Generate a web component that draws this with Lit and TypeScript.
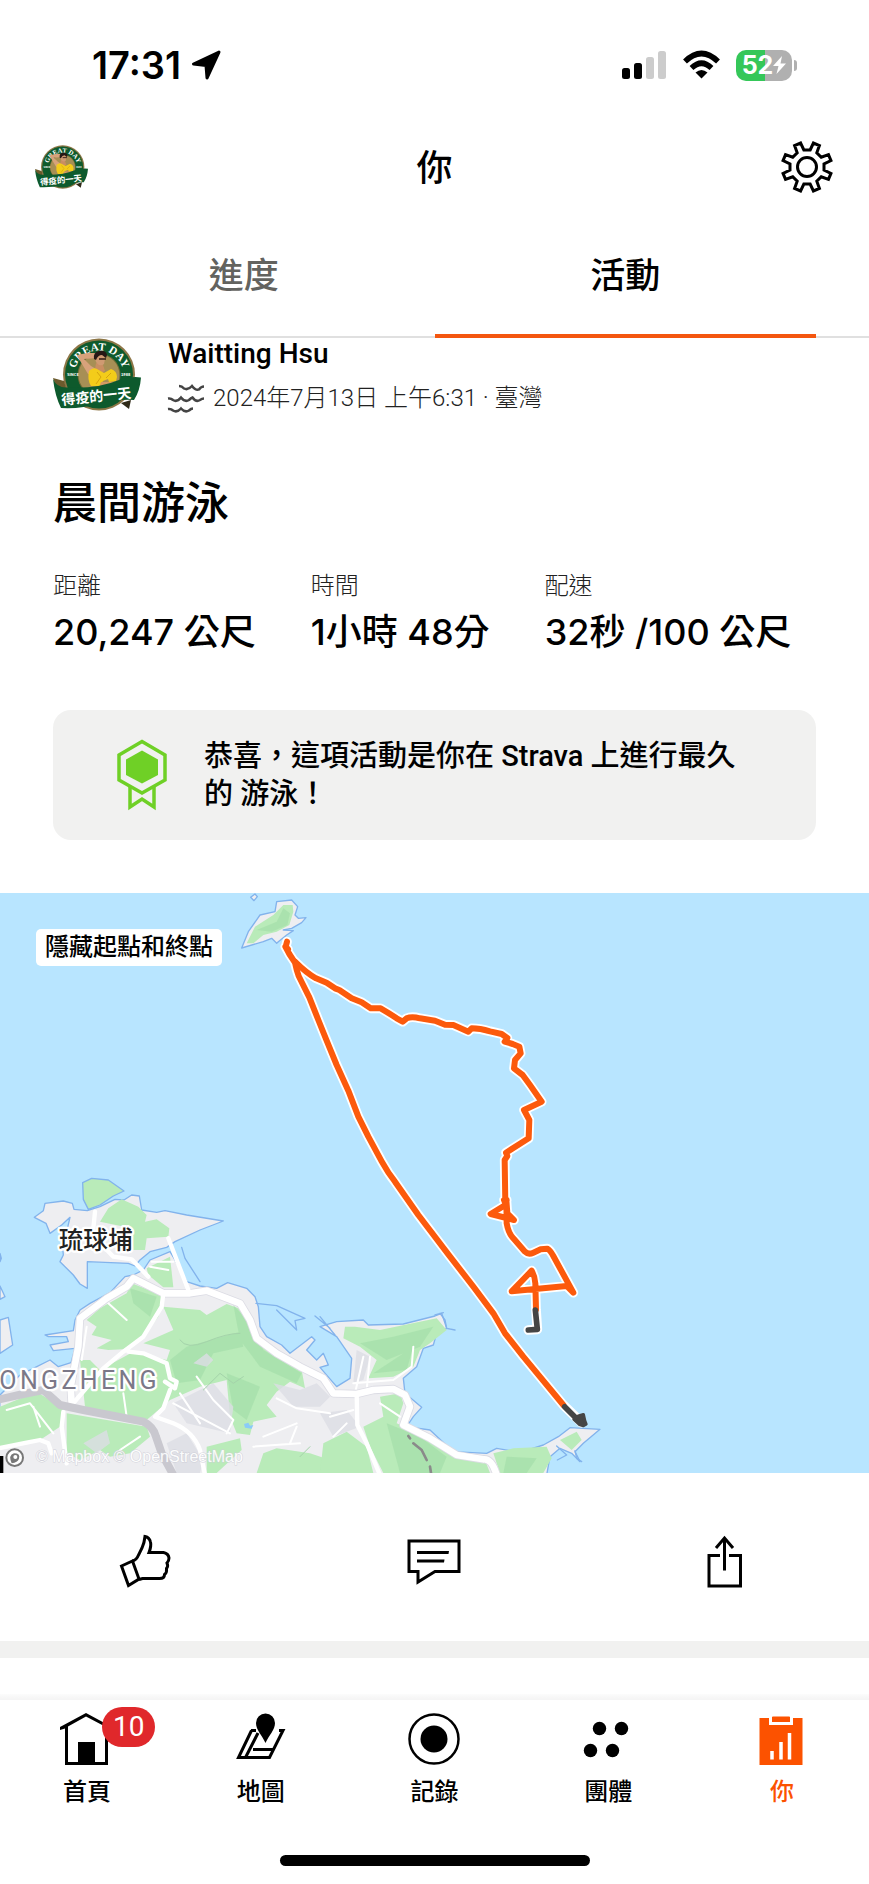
import { LitElement, html, svg, css } from "lit";
import { customElement, property } from "lit/decorators.js";

const gearPath = (() => {
  const point = (radius: number, degrees: number) => {
    const a = (degrees * Math.PI) / 180;
    return `${(26 + radius * Math.sin(a)).toFixed(2)} ${(26 - radius * Math.cos(a)).toFixed(2)}`;
  };
  const points: string[] = [];
  for (let i = 0; i < 8; i++) {
    const mid = 22.5 + i * 45;
    points.push(point(17.3, mid - 12), point(24.8, mid - 7.5), point(24.8, mid + 7.5), point(17.3, mid + 12));
  }
  return `M${points.join("L")}Z`;
})();

const icons = {
  thumb: svg`<g fill="none" stroke="#000" stroke-width="3">
    <path d="M2.500 31L13.500 26L20 44L9.500 50.500Z" />
    <path d="M13.500 26Q17.500 25 19.500 20L23 13Q25.500 7 26 1.500Q30.500 2.500 31.500 7Q32.500 11 30 17.500H44.500Q49.500 18.500 50 23Q50 26 48 28Q49.500 31 47.500 33.500Q48 38 45.500 39.500Q45.500 43.500 40.500 43.500H23.500L20 44.500" />
  </g>`,
  comment: svg`<path d="M0 6H50V36.500H26L9 47V36.500H0Z" fill="none" stroke="#000" stroke-width="3" />
    <path d="M8 16H40L39.500 19H8ZM8 24.500H35.500L35 27.500H8Z" />`,
  share: svg`<path d="M22 20.500H11V51H42.500V20.500H31M26.500 3V35.500M18 13L26.500 3L35 13" fill="none" stroke="#000" stroke-width="3" />`,
  home: svg`<path d="M-1 17V14L25 0L51 14V17L47 15.500V52H4V15.500ZM7 13.500V49H17V29H34V49H44V13.500L25 3.500Z" fill-rule="evenodd" />`,
  map: svg`<path d="M16 17.500H21M44 17.500H48L34.500 44.500H3.500L16.500 17.500M10.500 44.500L23 20M18 36.500H38" fill="none" stroke="#000" stroke-width="3" />
    <path d="M30.500 30C27 22 21 17 21 10A9.500 9.500 0 0 1 40 10C40 17 34 22 30.500 30Z" />`,
  record: svg`<circle cx="26" cy="26" r="24.500" fill="none" stroke="#000" stroke-width="2.500" /><circle cx="26" cy="26" r="13.500" />`,
  groups: svg`<circle cx="17.500" cy="15.500" r="6.700" /><circle cx="39.500" cy="15.500" r="6.700" /><circle cx="8.500" cy="37.500" r="6.700" /><circle cx="30.500" cy="37.500" r="6.700" />`,
  you: svg`<path d="M3.500 5H13V12H37V5H46.500V52H3.500Z" fill="#fc5200" /><path d="M16 4Q16 3.500 17 3.500H33Q34 3.500 34 4V9H16Z" fill="#fc5200" />
    <path d="M16 38V46.500M25 29V46.500M33.500 20V46.500" stroke="#fff" stroke-width="3.500" />`,
};

@customElement("athlete-badge")
class AthleteBadge extends LitElement {
  static styles = css`
    :host { display: block; }
    svg { display: block; width: 100%; height: auto; }
    text { font-family: "Noto Sans CJK TC", sans-serif; font-weight: 700; fill: #fff; }
    .arc { font-family: "Liberation Serif", serif; font-size: 11px; text-anchor: middle; }
    .year { font-size: 4px; }
    .ribbon { font-size: 14px; }
  `;
  render() {
    return html`<svg viewBox="0 0 88 73" role="img" aria-label="Waitting Hsu">
      <circle cx="46" cy="36.500" r="36" fill="#8d7646" />
      <circle cx="46" cy="36.500" r="34" fill="#0e5a2c" />
      <circle cx="46" cy="37" r="21.500" fill="#6f6a35" />
      <circle cx="46" cy="37" r="20.500" fill="#a78f55" />
      <path id="arc" d="M21.500 37A24.500 24.500 0 0 1 70.500 37" fill="none" />
      <text class="arc"><textPath href="#arc" startOffset="50%">GREAT DAY</textPath></text>
      <text class="year" x="14" y="38">SINCE</text><text class="year" x="68" y="38">1988</text>
      <path d="M46 15L34 15L24 17Q24 19 26 21L35 36L40 38L43 31L38 28L31 21L44 20Z" fill="#d7a27b" />
      <path d="M43 25L42 32L46 36L52 33L50 27Z" fill="#c98e62" />
      <path d="M42 18Q44 15 50 16L52 21L51 26Q49 28 46 27Q42 25 42 18Z" fill="#cf9a72" />
      <path d="M41 21Q40 14 46 13Q53 12 54 17L53 20L49 17Q45 17 43 22Z" fill="#251815" />
      <path d="M46 21H53" stroke="#2b1a16" stroke-width="1.500" />
      <path d="M36 33Q40 29 44 31L51 35L58 31Q64 33 64 39L63 43L56 44L55 41L50 43L47 48L38 48Q34 42 36 33Z" fill="#f3cc1a" />
      <path d="M44 34L48 39L43 46M58 35L53 40" fill="none" stroke="#d5a50d" stroke-width="1" />
      <path d="M48 44L61 44L60 50L46 50Z" fill="#d59a63" />
      <path d="M0 40L11 43L14 53L4 52Z" fill="#6c5a2c" />
      <path d="M68 65L76 71L78 62Z" fill="#2f2a18" />
      <path d="M0 41Q4 50 14 49.500Q45 51 66 42Q78 38 88 39.500Q87 53 81 62Q65 61 46 66Q28 71 8 70Q2 58 0 41Z" fill="#0d5a2d" />
      <text class="ribbon" x="9" y="67" transform="rotate(-6 9 67)">得疫的一天</text>
    </svg>`;
  }
}

@customElement("route-map")
class RouteMap extends LitElement {
  static styles = css`
    :host { display: block; position: relative; }
    svg { display: block; width: 100%; height: auto; background: #b8e5ff; }
    .toggle {
      position: absolute; top: 36px; left: 36px; border: 0; border-radius: 5px; padding: 0 9px;
      background: #fff; color: #000; font: 500 24px/37px Roboto, "Noto Sans CJK TC", sans-serif;
    }
    .land { fill: #eeeef1; stroke: #82b3ec; stroke-width: 4; stroke-linejoin: round; }
    .park { fill: #b9ebb9; }
    .hill { fill: #9fdaa5; opacity: 0.55; }
    .urban { fill: #dcdde5; opacity: 0.8; }
    .line { fill: none; stroke-linejoin: round; stroke-linecap: round; }
    .coast { stroke: #82b3ec; stroke-width: 4; }
    .casing { stroke: #dcdce4; stroke-width: 25; }
    .road { stroke: #fff; stroke-width: 20; }
    .minor { stroke: #fff; stroke-width: 13; }
    .lane { stroke: #fff; stroke-width: 6; }
    .highway { stroke: #c9c8cf; stroke-width: 24; }
    .halo { stroke: #fff; stroke-width: 29; }
    .route { stroke: #fc5a0c; stroke-width: 18; }
    .hidden { stroke: #454545; stroke-width: 17; }
    .end { fill: #454545; stroke: #454545; stroke-width: 10; stroke-linejoin: round; }
    .label { font: 500 74px "Noto Sans CJK TC", sans-serif; fill: #222; stroke: #fff; stroke-width: 14; stroke-linejoin: round; paint-order: stroke; }
    .district { font: 400 75px Roboto, sans-serif; letter-spacing: 10px; fill: #7b7888; stroke: #fff; stroke-width: 14; stroke-linejoin: round; paint-order: stroke; }
    .credit { font: 400 48px "Liberation Sans", sans-serif; fill: #fff; stroke: #cfcfd8; stroke-width: 3; paint-order: stroke; opacity: 0.9; }
  `;
  render() {
    const inbound = "M861 -655L857 -640L864 -632L856 -640L868 -618L885 -592Q890 -568 896 -552L928 -488L955 -420L980 -358L1010 -285L1045 -208L1075 -130L1105 -70L1145 4Q1165 40 1185 65L1255 165L1345 283L1420 380L1480 460L1515 520L1570 590L1690 735";
    const outbound = "M885 -595Q920 -560 948 -545L980 -532L1005 -515L1018 -510L1055 -485L1085 -473L1112 -455L1142 -455Q1168 -440 1190 -425L1208 -415L1220 -425Q1235 -432 1260 -425L1305 -418L1335 -406L1360 -405L1405 -385L1415 -395Q1440 -395 1470 -386L1505 -378L1522 -366L1514 -355L1538 -348L1558 -340L1562 -320L1545 -300L1542 -275L1568 -255L1590 -225L1625 -175L1572 -150L1588 -120L1586 -65L1518 -22L1522 -12L1514 0L1516 130L1512 120L1520 120L1516 135L1472 162L1542 180L1522 160L1519 120L1520 190Q1525 220 1540 235L1575 275Q1585 285 1600 278L1622 268L1642 266Q1650 270 1660 288L1720 398L1700 378L1535 394L1570 358L1595 332Q1605 350 1606 370L1608 448";
    return html`
      <svg viewBox="0 -801 2607 1740" role="img" aria-label="晨間游泳路線圖">
        <path class="land" d="M725 -636L745 -685L780 -735L825 -745L830 -775L875 -780L893 -760L885 -735L895 -725L918 -727L905 -712L875 -695L850 -690L880 -688L860 -675L835 -655L830 -650L815 -665L790 -655Z" />
        <path class="park" d="M740 -650L765 -700L820 -735L850 -765L878 -765L880 -745L868 -705L830 -685L790 -675L760 -650Z" />
        <path class="hill" d="M770 -690L830 -715L850 -755L870 -740L862 -705L815 -685Z" />
        <path class="land" d="M752 -788L765 -798L772 -790L762 -778Z" />

        <path class="land" d="M0 480L25 472L38 555L0 580ZM0 378L15 410L0 418ZM0 280L4 295L0 305Z" />
        <path class="land" d="M103 172L130 152L135 130L190 123L217 130L222 148L262 152L300 140L345 118L372 120L395 105L418 108L425 150L470 157L495 152L560 165L670 183L600 210L525 245L500 262L450 275L420 300L405 318L385 310L262 305L262 385L240 372L220 345L180 305L190 285L188 262L200 215L210 172L185 195L150 220L138 190Z" />
        <path class="land park" d="M248 68L275 55L325 60L372 93L340 108L300 135L265 148L250 118Z" />
        <path class="land" d="M0 705L60 645L100 625L150 600L175 620L213 608L225 565L160 572L150 555L205 545L200 530L145 530L135 525L220 512L225 480L240 450L270 430L330 398L375 350L400 345L430 330L450 300L510 275L525 300L560 365L600 378L650 385L683 368L740 385L765 410L775 440L780 500L800 530L845 555L870 580L935 530L945 540L920 570L950 600L970 580L985 615L960 622L1010 680L1050 655L1055 595L1010 530L960 500L1010 485L1090 480L1105 495L1210 492L1305 468L1325 460L1340 505L1310 520L1300 555L1270 565L1250 620L1210 655L1215 700L1265 742L1240 770L1220 800L1290 810L1360 875L1460 880L1490 865L1560 877L1630 855L1675 830L1710 803L1800 808L1750 850L1725 875L1740 905L1715 880L1680 865L1650 890L1640 945L-5 945Z" />
        <path class="line coast" d="M545 262L555 295L600 365M768 430L830 437L915 475L885 482L890 510L830 450M945 468L990 505M960 470L1005 525M1320 460L1335 480L1340 505L1365 510M1305 465L1330 458M1670 858L1700 885L1672 900M1725 872L1730 895L1745 905" />

        <path class="park" d="M300 185L325 145L365 118L415 140L440 165L435 185L470 178L508 205L505 230L440 235L435 270L400 270L395 205Z" />
        <path class="park" d="M440 325L510 290L520 382L490 382L445 345Z" />
        <path class="park" d="M260 480L300 445L380 400L395 370L485 405L475 470L430 530L370 568L325 570L290 565L335 540L275 525L290 500Z" />
        <path class="park" d="M490 440L600 450L620 465L680 432L730 450L765 530L850 580L905 630L915 685L870 665L830 695L800 735L830 770L760 785L750 825L710 820L690 770L680 660L600 680L510 720L440 780L370 770L255 740L240 600L270 600L300 630L400 575L500 600L510 570L430 550L520 510Z" />
        <path class="park" d="M0 740L110 695L190 745L180 800L120 840L0 860ZM200 760L440 800L450 830L390 880L330 890L300 870L240 900L200 880ZM620 860L720 835L725 870L650 939L620 939ZM790 880L830 865L930 880L990 900L990 939L770 939Z" />
        <path class="park" d="M1035 500L1065 500L1140 510L1310 475L1340 510L1290 550L1260 570L1240 620L1180 650L1105 655L1130 600L1080 560L1030 535Z" />
        <path class="park" d="M1090 800L1150 770L1140 710L1200 700L1210 730L1190 790L1280 830L1370 895L1455 900L1470 939L1150 939L1110 860ZM970 850L1040 815L1100 860L1120 939L960 939ZM1480 880L1540 865L1640 860L1655 895L1630 939L1500 939ZM1680 840L1730 815L1745 840L1715 870Z" />
        <path class="hill" d="M700 435L750 490L790 570L905 640L890 670L780 620L720 540ZM510 600L560 560L720 515L730 560L640 580L600 660L530 670ZM390 385L470 410L450 470L400 430ZM1080 550L1180 530L1300 500L1260 560L1160 600ZM1120 640L1240 560L1220 630ZM1160 790L1260 830L1340 890L1320 939L1200 939ZM1520 890L1610 895L1580 939L1510 939ZM680 640L780 680L740 780L700 750Z" />
        <path class="urban" d="M520 730L640 670L700 740L690 820L560 790ZM820 670L900 690L950 670L990 710L960 740L880 740ZM580 610L620 580L640 600L620 620ZM1070 570L1110 590L1090 660L1060 670ZM250 850L320 810L330 850L290 880ZM500 850L560 820L610 900L600 939L530 939ZM960 760L1040 750L1080 800L1000 830Z" />
        <path d="M732 792L745 788L750 797L760 795L755 806L735 803Z" fill="#8acbf8" />
        <path class="line lane" d="M260 500L245 600M320 425L380 480M450 320L505 330M455 305L520 305M370 700L380 770M590 650L640 720L700 780L680 820M520 730L690 820M540 700L600 790M790 830L890 790M890 800L870 850M760 860L900 850M830 715L890 745L990 760M20 750L90 730L160 820M100 740L120 800M360 870L420 830M1090 590L1065 700M1110 590L1100 690M1240 560L1235 620L1180 660L1060 670M990 770L1060 750M1040 790L1000 830M1140 730L1200 770" />

        <path class="line casing" d="M215 730L212 680L235 560L240 475L320 415L380 380L400 355L490 400L570 400L620 392L720 430L750 480L770 535L830 580L900 620L970 655L1000 700L1070 702L1120 690L1180 687L1215 705L1230 740L1210 795L1290 835L1370 885L1450 898Q1475 895 1490 945" />
        <path class="line road" d="M215 730L212 680L235 560L240 475L320 415L380 380L400 355L490 400L570 400L620 392L720 430L750 480L770 535L830 580L900 620L970 655L1000 700L1070 702L1120 690L1180 687L1215 705L1230 740L1210 795L1290 835L1370 885L1450 898Q1475 895 1490 945" />
        <path class="line minor" d="M285 155L278 225L340 290L395 298L445 350M505 235L565 390M490 400L485 440L430 530L370 575L310 625L215 735M385 575L430 580L500 610L510 655L530 665L525 685L495 665M510 690L490 745L465 770L520 790Q580 815 600 870L615 945M190 755L185 800L200 910M-5 865L80 848L120 840L145 850L155 880M1070 700L1072 795L1100 850L1140 945" />
        <path class="line highway" d="M-10 720L70 702L130 690L180 735L250 750L430 785Q460 800 468 830L485 880L520 945" />
        <path class="line" d="M1225 828L1230 835M1240 850L1265 870L1280 900M1290 920L1293 939" stroke="#8a8a8a" stroke-width="8" />
        <path class="line" d="M540 540Q560 570 620 545T720 520M610 690L660 640L700 670L730 650M930 860L900 890" stroke="#a4d3aa" stroke-width="3" />

        <text class="label" x="176" y="267">琉球埔</text>
        <text class="district" x="-2" y="686">ONGZHENG</text>
        <text class="credit" x="108" y="907">© Mapbox © OpenStreetMap</text>
        <rect x="0" y="888" width="10" height="51" />
        <circle cx="44" cy="893" r="25" fill="#fff" stroke="#777" stroke-width="6" />
        <path d="M35 910Q24 885 42 880Q62 880 57 896Q53 907 35 910Z" fill="#777" /><circle cx="46" cy="891" r="6" fill="#fff" />

        <path class="line halo" d=${outbound + "L1612 508L1585 510"} />
        <path class="line halo" d=${inbound + "L1745 788"} />
        <path class="line route" d=${outbound} />
        <path class="line route" d=${inbound} />
        <path class="line hidden" d="M1606 450L1612 508L1585 510M1694 740L1730 776" />
        <path class="end" d="M1722 778L1735 768L1750 764L1754 782L1758 792L1750 797L1738 793Z" />
      </svg>
      <button class="toggle" type="button">隱藏起點和終點</button>
    `;
  }
}

@customElement("tab-item")
class TabItem extends LitElement {
  @property() icon: keyof typeof icons = "home";
  @property() label = "";
  @property() badge = "";
  @property({ type: Boolean }) current = false;
  static styles = css`
    :host { display: block; flex: 1; }
    a { display: flex; flex-direction: column; align-items: center; gap: 11px; color: #000; text-decoration: none; font: 500 24px/32px Roboto, "Noto Sans CJK TC", sans-serif; }
    .current { color: #fc5200; }
    .glyph { position: relative; display: block; width: 52px; height: 52px; }
    svg { display: block; width: 52px; height: 52px; overflow: visible; }
    .count { position: absolute; left: 41px; top: -6px; padding: 0 11px; border-radius: 20px; background: #e0282b; color: #fff; font: 400 28px/40px Roboto, sans-serif; }
  `;
  render() {
    return html`<a href="#" class=${this.current ? "current" : ""}>
      <span class="glyph"><svg viewBox="0 0 52 52" aria-hidden="true">${icons[this.icon]}</svg>
        ${this.badge ? html`<span class="count">${this.badge}</span>` : ""}</span>
      ${this.label}
    </a>`;
  }
}

@customElement("app-root")
class AppRoot extends LitElement {
  static styles = css`
    :host { display: flex; flex-direction: column; min-height: 100vh; background: #fff; color: #000; font-family: Roboto, "Noto Sans CJK TC", sans-serif; }
    h1, h2, p, dl, dd, dt { margin: 0; }
    svg { display: block; overflow: visible; }
    button { border: 0; background: none; padding: 0; color: inherit; font: inherit; }
    .status { display: flex; justify-content: space-between; align-items: center; height: 130px; padding: 0 72px 0 92px; box-sizing: border-box; }
    .clock { display: flex; align-items: center; gap: 10px; font: 600 38px/44px Inter, sans-serif; }
    .signals { display: flex; align-items: center; }
    .signals .wifi { margin: 0 16px 0 17px; }
    .battery { display: flex; align-items: center; gap: 2px; }
    .cell { display: flex; align-items: center; justify-content: center; width: 56px; height: 31px; border-radius: 10px; background: linear-gradient(90deg, #35c759 52%, #b0b0b0 52%); color: #fff; font: 700 25px/31px Inter, sans-serif; }
    .nub { width: 3px; height: 11px; border-radius: 0 4px 4px 0; background: #b0b0b0; }
    .header { display: grid; grid-template-columns: 53px 1fr 53px; align-items: center; height: 74px; padding: 0 35px; }
    .header h1 { padding-top: 3px; text-align: center; font-size: 36px; line-height: 48px; font-weight: 500; }
    .tabs { display: flex; padding: 0 53px; border-bottom: 2px solid #e0e0e0; }
    .tab { flex: 1; padding: 44px 0 28px; margin-bottom: -2px; border-bottom: 4px solid transparent; font-size: 35px; line-height: 58px; font-weight: 500; color: #63635f; }
    .tab.selected { color: #000; border-color: #f4560f; }
    .activity { padding: 0 53px; }
    .athlete { display: flex; gap: 27px; height: 76px; }
    .athlete athlete-badge { width: 88px; }
    .who { display: flex; flex-direction: column; gap: 12px; }
    .name { font-size: 28px; line-height: 32px; font-weight: 500; }
    .when { display: flex; align-items: center; gap: 9px; font-size: 24px; line-height: 32px; font-weight: 300; color: #222; }
    .title { margin-top: 64px; font-size: 44px; line-height: 52px; font-weight: 500; }
    .stats { display: flex; gap: 55px; margin-top: 40px; white-space: nowrap; }
    .stats dt { font-size: 24px; line-height: 32px; font-weight: 300; color: #222; }
    .stats dd { margin-top: 8px; font: 500 36px/44px Inter, "Noto Sans CJK TC", sans-serif; }
    .praise { display: flex; align-items: center; gap: 37px; margin: 56px 0 53px; padding: 27px 64px; border-radius: 18px; background: #f1f1f0; font-size: 29px; line-height: 38px; font-weight: 500; }
    .praise svg { flex: none; }
    .actions { display: flex; padding: 62px 0 54px; }
    .actions button { flex: 1; display: flex; justify-content: center; }
    .divider { height: 17px; background: #f1f1f0; }
    .dock { margin-top: auto; }
    .edge { height: 6px; background: linear-gradient(#fcfcfc, #f4f4f4); }
    .items { display: flex; padding: 13px 0 47px; }
    .grip { width: 310px; height: 11px; margin: 0 auto 18px; border-radius: 6px; background: #000; }
  `;

  render() {
    return html`
      <div class="status">
        <div class="clock">17:31
          <svg width="30" height="30" viewBox="0 0 30 30" aria-hidden="true"><path d="M28 2L2.500 14L15 15.500L16 28Z" stroke="#000" stroke-width="3" stroke-linejoin="round" /></svg>
        </div>
        <div class="signals">
          <svg width="44" height="28" viewBox="0 0 44 28" role="img" aria-label="訊號">
            <rect x="0" y="17" width="8" height="11" rx="2.500" /><rect x="12" y="12" width="8" height="16" rx="2.500" />
            <rect x="24" y="6" width="8" height="22" rx="2.500" fill="#ccc" /><rect x="36" y="0" width="8" height="28" rx="2.500" fill="#ccc" />
          </svg>
          <svg class="wifi" width="37" height="28" viewBox="0 0 37 28" role="img" aria-label="Wi-Fi">
            <path d="M2 10.500Q18.500 -5.500 35 10.500M8.500 17Q18.500 7.500 28.500 17" fill="none" stroke="#000" stroke-width="5.500" />
            <path d="M12.500 21.500Q18.500 16.500 24.500 21.500L18.500 27.500Z" />
          </svg>
          <div class="battery">
            <div class="cell">52<svg width="13" height="18" viewBox="0 0 13 18" aria-hidden="true"><path d="M9 0L0 10H5.500L3.500 18L13 7.500H7.500Z" fill="#fff" /></svg></div>
            <div class="nub"></div>
          </div>
        </div>
      </div>
      <header class="header">
        <athlete-badge></athlete-badge>
        <h1>你</h1>
        <button type="button" aria-label="設定">
          <svg width="52" height="52" viewBox="0 0 52 52" fill="none" stroke="#000" stroke-width="3"><path d=${gearPath} /><circle cx="26" cy="26" r="9.500" /></svg>
        </button>
      </header>
      <nav class="tabs">
        <button class="tab" type="button">進度</button>
        <button class="tab selected" type="button">活動</button>
      </nav>
      <main>
        <section class="activity">
          <div class="athlete">
            <athlete-badge></athlete-badge>
            <div class="who">
              <p class="name">Waitting Hsu</p>
              <p class="when">
                <svg width="36" height="30" viewBox="0 0 36 30" fill="none" stroke="#444" stroke-width="2.500" aria-hidden="true">
                  <path d="M11 3Q14 3 16 5.500Q20 7.500 24 3Q28 8 31 6.500Q33 3.500 36 3.500M0 15.500Q3 15 5 17Q9 19.500 13 14.500Q17 19.500 21 17Q23 15 24.500 14.500Q28 19.500 32 17Q34 15.500 36 15.500M0 26Q3 25.500 5 27.500Q9 30 13 25.500Q17 30 21 27.500Q23 25.500 25 25.500" />
                </svg>
                2024年7月13日 上午6:31 · 臺灣
              </p>
            </div>
          </div>
          <h2 class="title">晨間游泳</h2>
          <dl class="stats">
            <div><dt>距離</dt><dd>20,247 公尺</dd></div>
            <div><dt>時間</dt><dd>1小時 48分</dd></div>
            <div><dt>配速</dt><dd>32秒 /100 公尺</dd></div>
          </dl>
          <div class="praise">
            <svg width="50" height="72" viewBox="0 0 50 72" aria-hidden="true">
              <path d="M25 2.500L48 16V41L25 54L2 41V16Z" fill="none" stroke="#6fd026" stroke-width="3.500" />
              <path d="M25 11.500L41 20.500V36L25 44.500L9 36V20.500Z" fill="#6fd026" />
              <path d="M13 48V68L25 60L37 68V48" fill="none" stroke="#6fd026" stroke-width="3.500" />
            </svg>
            <p>恭喜，這項活動是你在 Strava 上進行最久的 游泳！</p>
          </div>
        </section>
        <route-map></route-map>
        <div class="actions">
          <button type="button" aria-label="按讚"><svg width="52" height="52" viewBox="0 0 52 52">${icons.thumb}</svg></button>
          <button type="button" aria-label="留言"><svg width="52" height="52" viewBox="0 0 52 52">${icons.comment}</svg></button>
          <button type="button" aria-label="分享"><svg width="52" height="52" viewBox="0 0 52 52">${icons.share}</svg></button>
        </div>
        <div class="divider"></div>
      </main>
      <footer class="dock">
        <div class="edge"></div>
        <nav class="items">
          <tab-item icon="home" label="首頁" badge="10"></tab-item>
          <tab-item icon="map" label="地圖"></tab-item>
          <tab-item icon="record" label="記錄"></tab-item>
          <tab-item icon="groups" label="團體"></tab-item>
          <tab-item icon="you" label="你" current></tab-item>
        </nav>
        <div class="grip"></div>
      </footer>
    `;
  }
}
